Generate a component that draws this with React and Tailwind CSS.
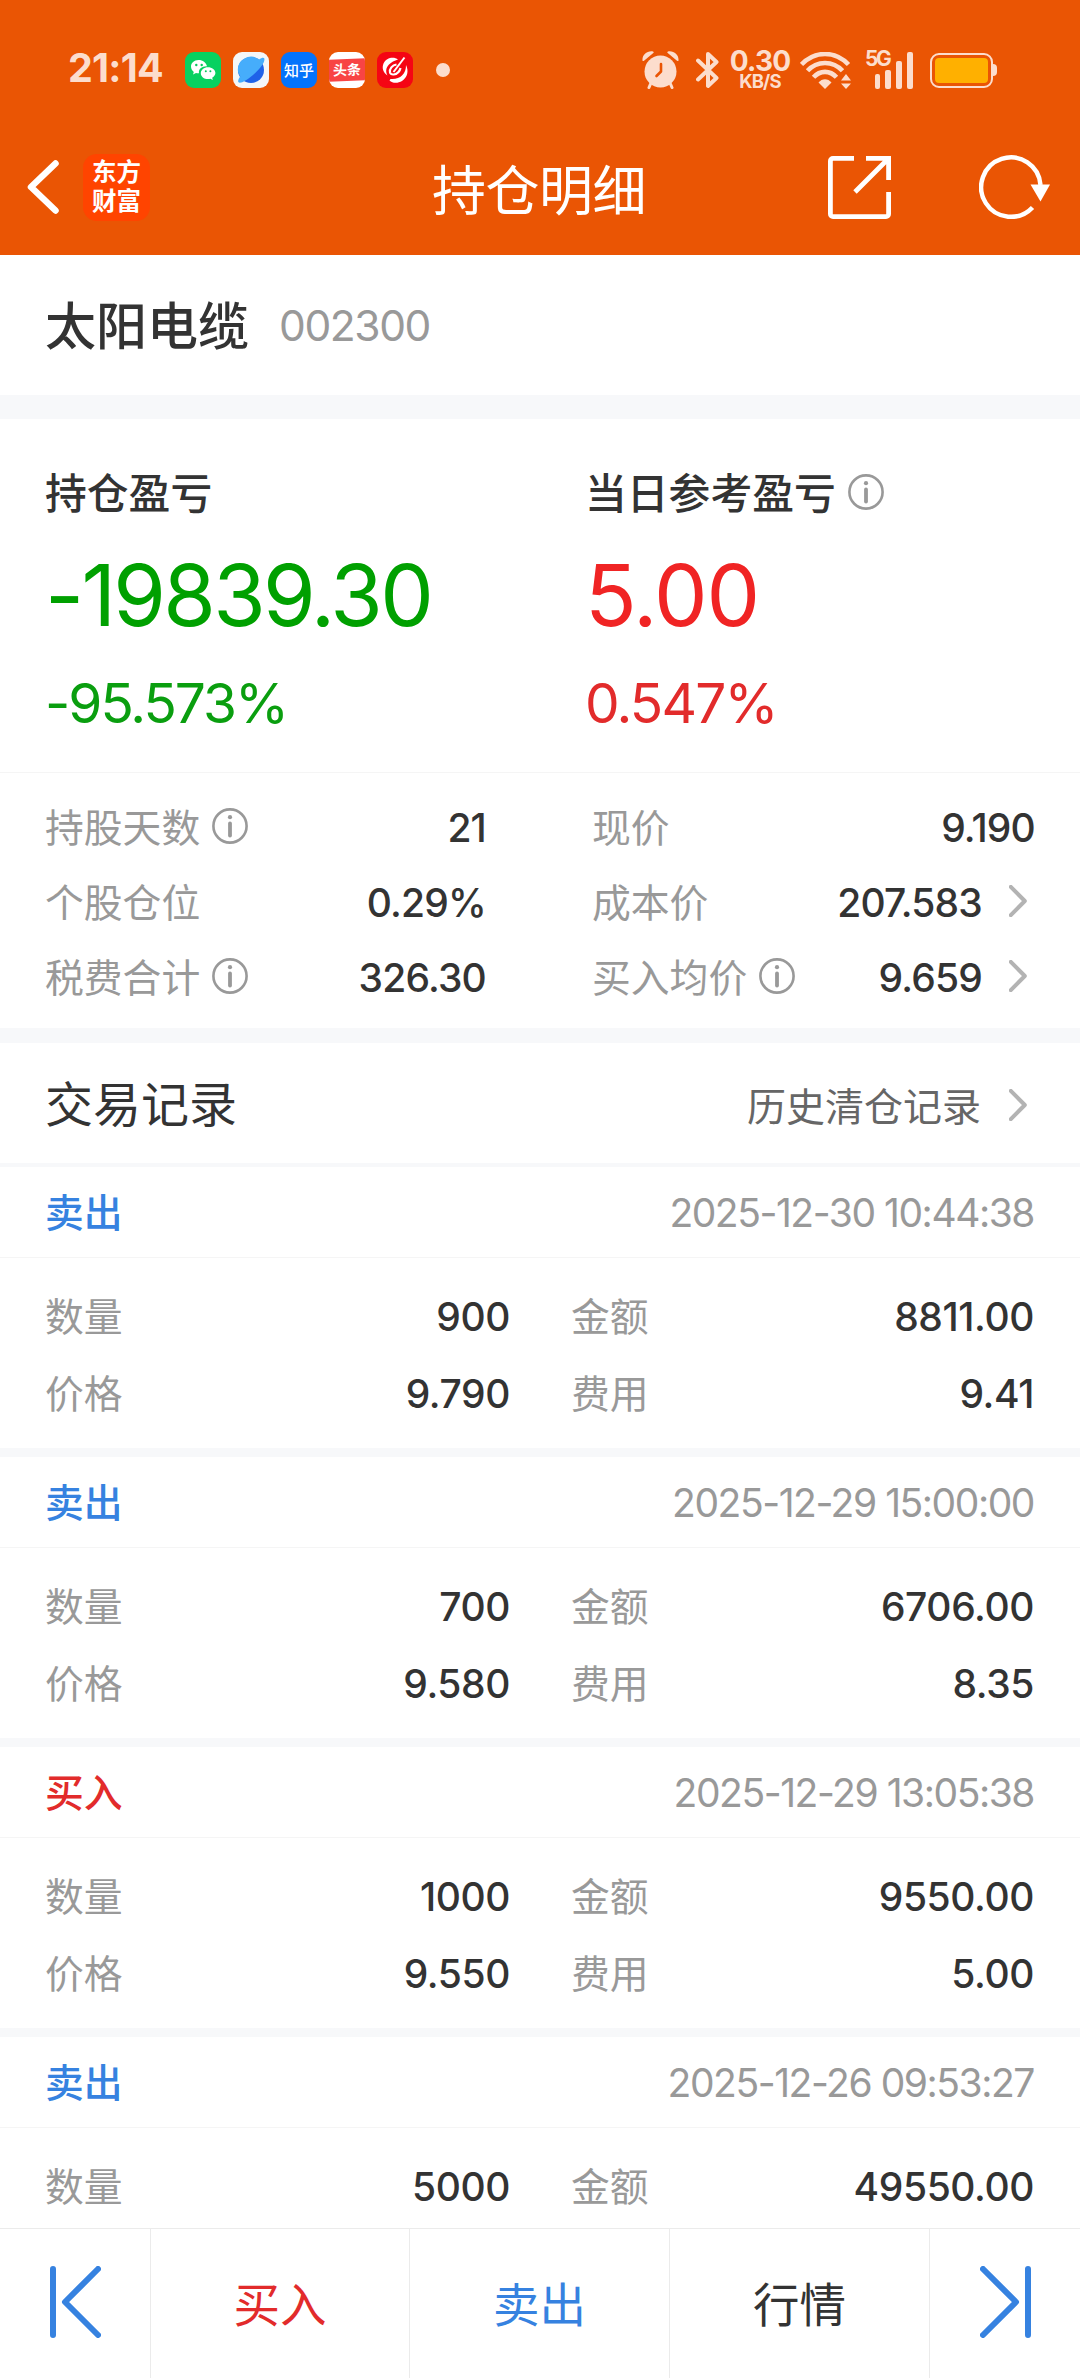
const CN = "font-['Inter','Noto_Sans_CJK_SC',sans-serif]";

function Info() {
  return (
    <svg className="size-9 shrink-0" viewBox="0 0 36 36" fill="none">
      <circle cx="18" cy="18" r="16.6" stroke="#999" strokeWidth="2.6" />
      <circle cx="18" cy="9.2" r="2.1" fill="#999" />
      <path d="M18 15.5V27.5" stroke="#999" strokeWidth="3.8" strokeLinecap="round" />
    </svg>
  );
}

function Chevron() {
  return (
    <svg className="h-8 w-[18px] shrink-0" viewBox="0 0 18 32" fill="none">
      <path d="M1.8 1.8L15.8 16L1.8 30.2" stroke="#b3b3b3" strokeWidth="4" strokeLinecap="round" strokeLinejoin="round" />
    </svg>
  );
}

function StatusBar() {
  return (
    <div className="flex h-[137px] items-center pt-[3px] text-[#fcddcd]">
      <div className="ml-[68px] -mt-[3px] w-[117px] text-[39.5px] font-bold leading-none tracking-[-0.8px]">21:14</div>
      <div className="flex items-center gap-3">
        <svg className="size-9" viewBox="0 0 36 36">
          <rect width="36" height="36" rx="9" fill="#07d160" />
          <path d="M13.5 8C9 8 6 11 6 14.6c0 2.200 1 4 2.800 5.300L8 22.500l3-1.500c1 .3 2 .4 3 .3-.8-4 2.800-7.200 8-7C21.200 10.500 17.800 8 13.500 8z" fill="#fff" />
          <path d="M23 15.200c-4 0-7.200 2.700-7.200 6s3.200 5.900 7.200 5.900c.9 0 1.700-.1 2.500-.4l2.300 1.300-.6-2.300c2-1.200 3.200-2.800 3.200-4.700 0-3.200-3.400-5.800-7.400-5.800z" fill="#fff" />
          <g fill="#07c95c"><circle cx="11.300" cy="13" r="1.200" /><circle cx="16.700" cy="13" r="1.200" /><circle cx="20.800" cy="19.300" r="1" /><circle cx="25.400" cy="19.300" r="1" /></g>
        </svg>
        <svg className="size-9" viewBox="0 0 36 36">
          <rect width="36" height="36" rx="9" fill="#f4f6f8" />
          <circle cx="18" cy="18" r="13" fill="#1f62e8" />
          <path d="M5 19.500A13 13 0 0 1 26 7.600c2.500-1.800 4.600-2.300 5.200-1.300 1.500 3-4 10.500-11.500 17C13.500 28.500 7.500 32 5.500 30.300c-.9-1 0-3.200 1.800-6A12.500 12.500 0 0 1 5 19.500z" fill="#46adfb" />
        </svg>
        <div className="flex size-9 items-center justify-center rounded-[9px] bg-[#0473fb] text-[15px] font-medium leading-none text-white">知乎</div>
        <div className="flex size-9 flex-col justify-center overflow-hidden rounded-[9px] bg-white">
          <div className="flex h-[22px] -skew-y-2 items-center justify-center bg-[#f84444] text-[14px] font-bold leading-none text-white">头条</div>
        </div>
        <svg className="size-9" viewBox="0 0 36 36" fill="none">
          <rect width="36" height="36" rx="9" fill="#f50514" />
          <path d="M21 7.500C17 4 9 5.500 6.500 11.500c-1.800 4.500-.5 9 4 12-2.200-4-1.500-8 1.500-11 2.200-2.200 5.500-3.800 9-5z" fill="#fff" />
          <path d="M29 13c3 6 1.500 12.500-4 16-4 2.500-9.500 2.500-12.500-.5l1-1.500c5 .5 9-1 11.500-3.500 3-3 4-6.500 4-10.500z" fill="#fff" />
          <path d="M27.500 5.500L16.500 20" stroke="#fff" strokeWidth="2" />
          <path d="M19.500 12.500c-4 .5-7.500 4.500-6.500 8 1 3 6 2.500 8.500-.5 1-1.200 1.700-2.500 2-4" stroke="#fff" strokeWidth="2.200" />
        </svg>
      </div>
      <div className="ml-[23px] size-3.5 rounded-full bg-current" />

      <svg className="ml-[192px] h-[38px] w-[37px]" viewBox="0 0 37 38" fill="none">
        <circle cx="18.500" cy="20.500" r="16" fill="currentColor" />
        <path d="M0.500 9.500C0 4 5-.5 11 .5c1 .5 1 1 .3 1.600L2 9.700c-.6.500-1.300.5-1.500-.2zM36.500 9.500C37 4 32-.5 26 .5c-1 .5-1 1-.3 1.600L35 9.700c.6.500 1.300.5 1.500-.2z" fill="currentColor" />
        <path d="M8.500 33L7 36.500M28.500 33L30 36.500" stroke="currentColor" strokeWidth="3" strokeLinecap="round" />
        <path d="M19 13V20.500L14.500 25" stroke="#ea5504" strokeWidth="2.600" strokeLinecap="round" strokeLinejoin="round" />
      </svg>
      <svg className="ml-[17px] h-[38px] w-[23px]" viewBox="0 0 23 38" fill="none">
        <path d="M2 9.500L20.500 27L12 35V3L20.500 11L2 28.500" stroke="currentColor" strokeWidth="4" strokeLinecap="round" strokeLinejoin="round" />
      </svg>
      <div className="ml-[11px] -mt-[2px] flex w-[60px] flex-col items-center">
        <div className="text-[28px] font-bold leading-[23px] tracking-[-0.8px]">0.30</div>
        <div className="text-[18.5px] font-bold leading-4 tracking-[-0.8px]">KB/S</div>
      </div>
      <svg className="ml-[10px] h-[37px] w-[52px]" viewBox="0 0 52 37" fill="none" stroke="currentColor" strokeWidth="4.600">
        <path d="M1.500 12.500C15-1.500 35-1.500 48.500 12.500M7.500 18.800C17 8.300 33 8.300 42.500 18.800M13.500 25.300C20 18 30 18 36.500 25.300" />
        <path d="M18.500 30.500C22 26 28 26 31.500 30.500L25 37z" fill="currentColor" stroke="none" />
        <path d="M41 28.500L46 22L51 28.500zM41 31.500L46 37L51 31.500z" fill="currentColor" stroke="none" />
      </svg>
      <div className="relative ml-[13px] h-[38px] w-12">
        <span className="absolute left-0 top-0 text-[21px] font-bold leading-4 tracking-[-2.5px]">5G</span>
        <div className="flex h-full items-end justify-end gap-[5px]">
          <i className="h-[15px] w-[5px] rounded-[2px] bg-current" />
          <i className="h-[19px] w-[6px] rounded-[2px] bg-current" />
          <i className="h-7 w-[6px] rounded-[2px] bg-current" />
          <i className="h-[37px] w-[6px] rounded-[2px] bg-current" />
        </div>
      </div>
      <div className="ml-[17px] flex items-center">
        <div className="h-[35px] w-[63px] rounded-[9px] border-2 border-current p-[3px]">
          <div className="h-full rounded-[4px] bg-[#ffb000]" />
        </div>
        <div className="h-3 w-1 rounded-r-[4px] bg-current" />
      </div>
    </div>
  );
}

function NavBar() {
  return (
    <div className="flex h-[118px] items-start text-white">
      <svg className="ml-[27px] mt-[23px] h-[54px] w-8" viewBox="0 0 32 54" fill="none">
        <path d="M28.500 3.500L4 27L28.500 50.500" stroke="currentColor" strokeWidth="6.500" strokeLinecap="round" strokeLinejoin="round" />
      </svg>
      <div className="ml-6 mt-[17px] flex h-[67px] w-[67px] flex-col items-center justify-center rounded-[14px] bg-[#ff4400] pb-px text-[24.5px] font-bold leading-[29px]">
        <span>东方</span>
        <span>财富</span>
      </div>
      <div className="ml-[282px] mt-[18px] w-[220px] text-[54px] leading-[74px] tracking-[-0.500px]">持仓明细</div>
      <svg className="ml-[176px] mt-[19px] h-[63px] w-[63px]" viewBox="0 0 63 63" fill="none" stroke="currentColor" strokeWidth="4.800">
        <path d="M26 2.400H5a2.600 2.600 0 0 0-2.600 2.600V58a2.600 2.600 0 0 0 2.600 2.600H58A2.600 2.600 0 0 0 60.600 58V36M38 2.400H60.600V24M60 3L27 36" />
      </svg>
      <svg className="ml-[88px] mt-[18px] h-16 w-[71px]" viewBox="0 0 71 64" fill="none">
        <path d="M53.500 52.500A29.700 29.700 0 1 1 61.500 30" stroke="currentColor" strokeWidth="4.500" />
        <path d="M51.500 29.500H71L61.500 46.500z" fill="currentColor" />
      </svg>
    </div>
  );
}

function Detail({ label, value, info, arrow }) {
  return (
    <div className="flex h-[75px] items-center">
      <span className="text-[38.800px] text-[#999]">{label}</span>
      {info && <span className="ml-3 -mt-[6px]"><Info /></span>}
      <span className="ml-auto text-[39px] font-medium tracking-[-0.800px] text-[#333]">{value}</span>
      {arrow && <span className="ml-[27px] mr-2 -mt-[6px]"><Chevron /></span>}
    </div>
  );
}

function Field({ label, value }) {
  return (
    <div className="flex h-[77px] items-center justify-between">
      <span className="text-[38.800px] text-[#999]">{label}</span>
      <span className="text-[39px] font-medium tracking-[-0.400px] text-[#333]">{value}</span>
    </div>
  );
}

const records = [
  { side: "卖出", time: "2025-12-30 10:44:38", qty: "900", price: "9.790", amount: "8811.00", fee: "9.41" },
  { side: "卖出", time: "2025-12-29 15:00:00", qty: "700", price: "9.580", amount: "6706.00", fee: "8.35" },
  { side: "买入", time: "2025-12-29 13:05:38", qty: "1000", price: "9.550", amount: "9550.00", fee: "5.00" },
  { side: "卖出", time: "2025-12-26 09:53:27", qty: "5000", amount: "49550.00" },
];

function Record({ r }) {
  return (
    <section className="h-[290px] border-b-[9px] border-[#f7f8fa]">
      <div className="flex h-[91px] items-center justify-between border-b border-[#f5f5f5] pl-[45px] pr-[46px] pt-[3px]">
        <span className={r.side === "买入" ? "text-[38.800px] font-medium text-[#e22b2b]" : "text-[38.800px] font-medium text-[#3682e0]"}>{r.side}</span>
        <span className="text-[39px] tracking-[-1.450px] text-[#999]">{r.time}</span>
      </div>
      <div className="grid grid-cols-[465px_463px] gap-x-[61px] pl-[45px] pt-[21px]">
        <Field label="数量" value={r.qty} />
        <Field label="金额" value={r.amount} />
        {r.price && <Field label="价格" value={r.price} />}
        {r.fee && <Field label="费用" value={r.fee} />}
      </div>
    </section>
  );
}

export default function App() {
  return (
    <div className={`${CN} flex h-[2378px] w-[1080px] flex-col overflow-hidden bg-white text-[#333]`}>
      <header className="h-[255px] shrink-0 bg-[#ea5504]">
        <StatusBar />
        <NavBar />
      </header>

      <div className="flex h-[140px] shrink-0 items-center pl-[45px] pt-[5px]">
        <h1 className="text-[51px] font-medium">太阳电缆</h1>
        <span className="-mt-[3px] ml-[30px] text-[42.500px] tracking-[-1.400px] text-[#999]">002300</span>
      </div>
      <div className="h-6 shrink-0 bg-[#f7f8fa]" />

      <div className="grid h-[354px] shrink-0 grid-cols-[540px_1fr] border-b border-[#f5f5f5] pl-[45px] pt-11">
        <div>
          <div className="h-[63px] text-[41.800px] font-medium leading-[63px]">持仓盈亏</div>
          <div className="mt-[15px] h-[110px] text-[85px] leading-[110px] tracking-[-2.700px] text-[#00a000]">-19839.30</div>
          <div className="mt-[15px] h-[74px] text-[55px] leading-[74px] tracking-[-2px] text-[#0a9e0f]">-95.573%</div>
        </div>
        <div>
          <div className="flex h-[63px] items-center text-[41.800px] font-medium leading-[63px]">当日参考盈亏<span className="-mt-[6px] ml-[12px]"><Info /></span></div>
          <div className="mt-[15px] h-[110px] text-[85px] leading-[110px] tracking-[-1.300px] text-[#f02424]">5.00</div>
          <div className="mt-[15px] h-[74px] text-[55px] leading-[74px] tracking-[-1.800px] text-[#e22b2b]">0.547%</div>
        </div>
      </div>

      <div className="grid h-[255px] shrink-0 grid-cols-[441px_443px] gap-x-[106px] pl-[45px] pt-[18px]">
        <div>
          <Detail label="持股天数" value="21" info />
          <Detail label="个股仓位" value="0.29%" />
          <Detail label="税费合计" value="326.30" info />
        </div>
        <div>
          <Detail label="现价" value="9.190" />
          <Detail label="成本价" value="207.583" arrow />
          <Detail label="买入均价" value="9.659" info arrow />
        </div>
      </div>
      <div className="h-[15px] shrink-0 bg-[#f7f8fa]" />

      <div className="flex h-[124px] shrink-0 items-center border-b-4 border-[#f7f8fa] pl-[45px] pr-[53px] pt-[3px]">
        <h2 className="text-[48px]">交易记录</h2>
        <span className="ml-auto mt-[6px] text-[39px] text-[#666]">历史清仓记录</span>
        <span className="ml-7"><Chevron /></span>
      </div>

      <main className="min-h-0 flex-1 overflow-hidden">
        {records.map((r) => <Record key={r.time} r={r} />)}
      </main>

      <nav className="grid h-[150px] shrink-0 grid-cols-[151px_259px_260px_260px_150px] border-t border-[#ebebeb] text-[46.500px]">
        <div className="flex justify-center border-r border-[#ebebeb] pt-[37px]">
          <svg className="h-[72px] w-[51px]" viewBox="0 0 51 72" fill="none" stroke="#3682e0" strokeWidth="6" strokeLinecap="round" strokeLinejoin="round">
            <path d="M3 3V69M48 3L15 36L48 69" />
          </svg>
        </div>
        <div className="flex items-center justify-center border-r border-[#ebebeb] pt-1 text-[#e22b2b]">买入</div>
        <div className="flex items-center justify-center border-r border-[#ebebeb] pt-1 text-[#3682e0]">卖出</div>
        <div className="flex items-center justify-center border-r border-[#ebebeb] pt-1">行情</div>
        <div className="flex justify-center pt-[37px]">
          <svg className="h-[72px] w-[51px]" viewBox="0 0 51 72" fill="none" stroke="#3682e0" strokeWidth="6" strokeLinecap="round" strokeLinejoin="round">
            <path d="M48 3V69M3 3L36 36L3 69" />
          </svg>
        </div>
      </nav>
    </div>
  );
}
